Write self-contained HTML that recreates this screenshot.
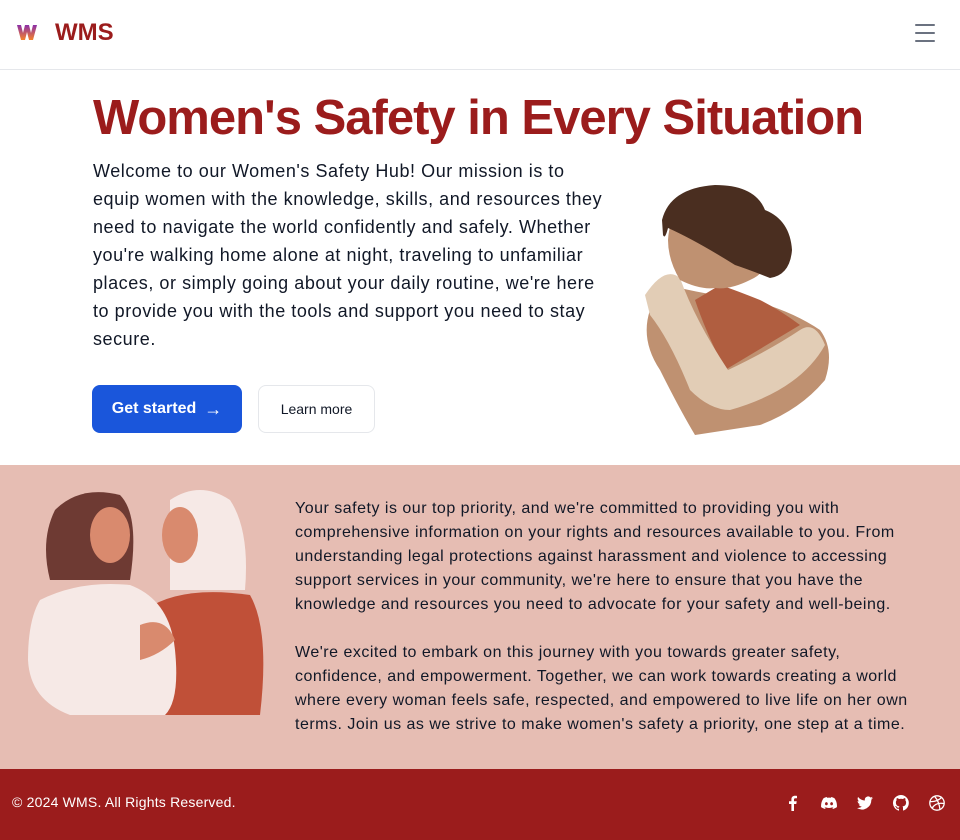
<!DOCTYPE html>
<html><head><meta charset="utf-8"><style>
*{margin:0;padding:0;box-sizing:border-box}
body{width:960px;height:840px;overflow:hidden;font-family:"Liberation Sans",sans-serif;background:#fff;color:#111827}
nav{height:70px;border-bottom:1px solid #e5e7eb;position:relative}
.logo{position:absolute;left:16px;top:22px}
.brand{position:absolute;left:55px;top:19px;font-size:24px;font-weight:600;color:#9b1c1c}
.burger{position:absolute;right:25px;top:24px;width:20px}
.burger i{display:block;height:2px;background:#6b7280;margin-bottom:6px;border-radius:1px}
h1{position:absolute;left:93px;top:90px;font-size:49px;font-weight:700;color:#9b1c1c;letter-spacing:-1px;white-space:nowrap}
.intro{position:absolute;left:93px;top:157px;font-size:18px;line-height:28px;color:#111827;white-space:nowrap;letter-spacing:0.55px}
.btn1{position:absolute;left:92px;top:385px;width:150px;height:48px;background:#1a56db;border-radius:8px;color:#fff;font-size:16px;font-weight:600;display:flex;align-items:center;justify-content:center;gap:8px}
.btn2{position:absolute;left:258px;top:385px;width:117px;height:48px;border:1px solid #e5e7eb;border-radius:8px;font-size:14px;display:flex;align-items:center;justify-content:center;color:#111827}
.sec{position:absolute;left:0;top:465px;width:960px;height:304px;background:#e6bdb3}
.txt{position:absolute;left:295px;top:497px;font-size:16px;line-height:24px;color:#111827;white-space:nowrap;letter-spacing:0.5px}
footer{position:absolute;left:0;top:769px;width:960px;height:71px;background:#9b1c1c;color:#fff}
.copy{position:absolute;left:12px;top:25px;font-size:14px;letter-spacing:0.2px}
.icons{position:absolute;right:15px;top:26px;display:flex;gap:20px}
.icons svg{width:16px;height:16px;fill:#fff}
</style></head><body>
<nav>
<svg class="logo" width="22" height="20" viewBox="0 0 22 20"><defs><linearGradient id="g" x1="0" y1="0" x2="0" y2="1"><stop offset="0" stop-color="#8b2fa8"/><stop offset="1" stop-color="#f5822a"/></linearGradient></defs><path d="M1 3 L5 18 L9 18 L11 10 L13 18 L17 18 L21 3 L17 3 L15 11 L13 3 L9 3 L7 11 L5 3Z" fill="url(#g)"/></svg>
<div class="brand">WMS</div>
<div class="burger"><i></i><i></i><i></i></div>
</nav>
<h1>Women's Safety in Every Situation</h1>
<p class="intro">Welcome to our Women's Safety Hub! Our mission is to<br>equip women with the knowledge, skills, and resources they<br>need to navigate the world confidently and safely. Whether<br>you're walking home alone at night, traveling to unfamiliar<br>places, or simply going about your daily routine, we're here<br>to provide you with the tools and support you need to stay<br>secure.</p>
<div class="btn1">Get started <span style="font-size:18px">→</span></div>
<div class="btn2">Learn more</div>
<svg style="position:absolute;left:600px;top:170px" width="300" height="290" viewBox="0 0 300 290">
<path d="M50 140 Q40 170 60 200 Q80 240 95 265 L160 255 Q200 240 225 210 Q235 180 220 160 Q190 140 150 130 Q110 125 80 118Z" fill="#bf9171"/>
<path d="M95 130 Q105 160 125 200 L200 155 Q180 140 160 130 Q135 120 120 115Z" fill="#b05e40"/>
<path d="M45 125 Q65 95 80 108 Q95 150 128 200 Q170 180 200 160 Q215 150 225 175 Q200 220 130 240 Q110 240 90 220 Q70 170 50 145Z" fill="#e2cdb6"/>
<path d="M68 70 Q70 30 115 20 Q150 15 170 60 Q175 100 150 110 Q130 120 115 118 Q100 120 80 110 Q68 90 68 70Z" fill="#bf9171"/>
<path d="M62 50 Q70 18 115 15 Q155 15 165 40 Q190 50 192 80 Q190 105 170 108 Q150 100 135 95 Q95 70 68 58 Q65 70 63 65Z" fill="#4a2e20"/>
</svg>
<div class="sec">
<svg style="position:absolute;left:0;top:5px" width="300" height="250" viewBox="0 0 300 250">
<path d="M170 30 Q200 10 230 30 Q250 60 245 120 L170 120Z" fill="#f6e9e6"/>
<path d="M55 40 Q80 15 120 25 Q140 45 130 110 L50 110 Q40 70 55 40Z" fill="#6e3a33"/>
<ellipse cx="110" cy="65" rx="20" ry="28" fill="#d98a6e"/>
<ellipse cx="180" cy="65" rx="18" ry="28" fill="#d98a6e"/>
<path d="M145 140 Q180 115 250 125 Q270 160 260 245 L150 245Z" fill="#c05038"/>
<path d="M40 130 Q80 110 130 115 Q170 130 175 180 Q180 230 165 245 L70 245 Q30 230 28 190 Q28 150 40 130Z" fill="#f6e9e6"/>
<path d="M140 155 Q165 145 175 170 Q160 185 140 190Z" fill="#d98a6e"/>
</svg>
</div>
<div class="txt">Your safety is our top priority, and we're committed to providing you with<br>comprehensive information on your rights and resources available to you. From<br>understanding legal protections against harassment and violence to accessing<br>support services in your community, we're here to ensure that you have the<br>knowledge and resources you need to advocate for your safety and well-being.<br><br>We're excited to embark on this journey with you towards greater safety,<br>confidence, and empowerment. Together, we can work towards creating a world<br>where every woman feels safe, respected, and empowered to live life on her own<br>terms. Join us as we strive to make women's safety a priority, one step at a time.</div>
<footer>
<div class="copy">© 2024 WMS. All Rights Reserved.</div>
<div class="icons">
<svg viewBox="0 0 16 16"><path d="M9 16V9h2.3l.4-2.7H9V4.6c0-.8.3-1.3 1.4-1.3H12V.9C11.6.8 10.8.7 10 .7 8 .7 6.4 2 6.4 4.2v2.1H4V9h2.4v7Z"/></svg>
<svg viewBox="0 0 16 16"><path d="M13.5 3.2A13 13 0 0 0 10.3 2l-.4.8a12 12 0 0 0-3.8 0L5.7 2a13 13 0 0 0-3.2 1.2C.4 6.2-.1 9.2.1 12.1A13 13 0 0 0 4 14l.8-1.3-1.3-.6.3-.2a9 9 0 0 0 8.4 0l.3.2-1.3.6.8 1.3a13 13 0 0 0 3.9-1.9c.3-3.4-.5-6.4-2.4-8.9ZM5.4 10.3c-.8 0-1.4-.7-1.4-1.6s.6-1.6 1.4-1.6 1.4.7 1.4 1.6-.6 1.6-1.4 1.6Zm5.2 0c-.8 0-1.4-.7-1.4-1.6s.6-1.6 1.4-1.6 1.4.7 1.4 1.6-.6 1.6-1.4 1.6Z"/></svg>
<svg viewBox="0 0 16 16"><path d="M16 3a6.6 6.6 0 0 1-1.9.5A3.3 3.3 0 0 0 15.6 1.7a6.6 6.6 0 0 1-2.1.8 3.3 3.3 0 0 0-5.6 3A9.3 9.3 0 0 1 1.1 2a3.3 3.3 0 0 0 1 4.4 3.3 3.3 0 0 1-1.5-.4 3.3 3.3 0 0 0 2.6 3.2 3.3 3.3 0 0 1-1.5.1 3.3 3.3 0 0 0 3.1 2.3A6.6 6.6 0 0 1 0 13a9.3 9.3 0 0 0 14.3-8.3A6.7 6.7 0 0 0 16 3Z"/></svg>
<svg viewBox="0 0 16 16"><path d="M8 0a8 8 0 0 0-2.5 15.6c.4 0 .5-.2.5-.4v-1.5c-2.2.5-2.7-1-2.7-1-.4-.9-.9-1.2-.9-1.2-.7-.5.1-.5.1-.5.8.1 1.2.8 1.2.8.7 1.3 1.9.9 2.3.7.1-.5.3-.9.5-1.1-1.8-.2-3.6-.9-3.6-4 0-.9.3-1.6.8-2.1-.1-.2-.4-1 .1-2.1 0 0 .7-.2 2.2.8a7.5 7.5 0 0 1 4 0c1.5-1 2.2-.8 2.2-.8.4 1.1.2 1.9.1 2.1.5.6.8 1.3.8 2.1 0 3.1-1.9 3.8-3.6 4 .3.3.5.8.5 1.5v2.2c0 .2.1.5.6.4A8 8 0 0 0 8 0Z"/></svg>
<svg viewBox="0 0 16 16" fill="none" stroke="#fff" stroke-width="1.3" style="fill:none"><circle cx="8" cy="8" r="7.2"/><path d="M1 6.5c4 .5 9-1 12-4.5M3 13.5c2-4 6-6 12-5M5.5 1.2c3 3.5 5 8 5.5 13.5"/></svg>
</div>
</footer>
</body></html>
